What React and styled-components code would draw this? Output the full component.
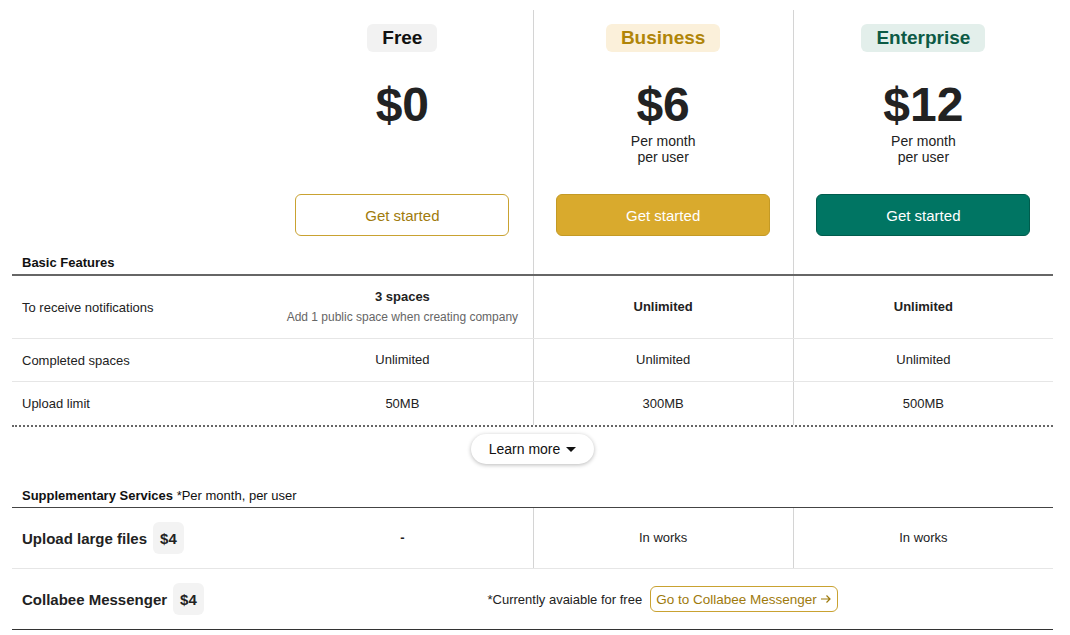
import styled, { createGlobalStyle } from "styled-components";

const GlobalStyle = createGlobalStyle`
  body {
    margin: 0;
    background: #fff;
    font-family: "Liberation Sans", Arial, sans-serif;
    color: #222;
  }
`;

const Page = styled.div`
  width: 1041px;
  padding: 10px 0 0 12px;
`;

const Grid = styled.div`
  display: grid;
  grid-template-columns: repeat(4, 1fr);
`;

const HeaderRow = styled(Grid)`
  border-bottom: 2px solid #666;
`;

const SectionLabel = styled.div`
  display: flex;
  align-items: flex-end;
  padding: 0 0 3px 10px;
  font-size: 13px;
  line-height: 16px;
  font-weight: bold;
  color: #111;
`;

const PlanCell = styled.div`
  display: flex;
  flex-direction: column;
  align-items: center;
  padding: 14px 0 38px;
  border-left: ${(p) => (p.$divider ? "1px solid #d4d4d4" : "none")};
`;

const Badge = styled.div`
  height: 28px;
  padding: 0 15px;
  border-radius: 6px;
  font-size: 19px;
  line-height: 28px;
  font-weight: bold;
  background: ${(p) => p.$bg};
  color: ${(p) => p.$color};
`;

const Price = styled.div`
  margin-top: 25px;
  font-size: 48px;
  line-height: 56px;
  font-weight: bold;
  color: #222;
`;

const PriceNote = styled.div`
  min-height: 32px;
  font-size: 14px;
  line-height: 16px;
  text-align: center;
  color: #222;
`;

const StartButton = styled.button`
  margin-top: 29px;
  width: 214px;
  height: 42px;
  border-radius: 6px;
  font-family: inherit;
  font-size: 15px;
  cursor: pointer;
  border: 1px solid ${(p) => p.$border};
  background: ${(p) => p.$bg};
  color: ${(p) => p.$color};
`;

const Row = styled(Grid)`
  border-bottom: ${(p) => p.$border || "1px solid #e6e6e6"};
`;

const Label = styled.div`
  display: flex;
  align-items: center;
  gap: 6px;
  padding-left: 10px;
  font-size: ${(p) => (p.$big ? "15px" : "13px")};
  font-weight: ${(p) => (p.$big ? "bold" : "normal")};
  color: #222;
`;

const Cell = styled.div`
  display: flex;
  flex-direction: column;
  align-items: center;
  justify-content: center;
  min-height: ${(p) => p.$h || 42}px;
  font-size: 13px;
  line-height: 16px;
  font-weight: ${(p) => (p.$bold ? "bold" : "normal")};
  border-left: ${(p) => (p.$divider ? "1px solid #d4d4d4" : "none")};
  color: #222;
`;

const SubNote = styled.div`
  margin-top: 4px;
  font-size: 12px;
  line-height: 16px;
  font-weight: normal;
  color: #666;
`;

const DottedRule = styled.div`
  border-top: 2px dotted #666;
`;

const MoreWrap = styled.div`
  display: flex;
  justify-content: center;
  padding-top: 7px;
`;

const MoreButton = styled.button`
  display: flex;
  align-items: center;
  gap: 6px;
  height: 30px;
  padding: 0 18px;
  border: none;
  border-radius: 15px;
  background: #fff;
  box-shadow: 0 1px 4px rgba(0, 0, 0, 0.28);
  font-family: inherit;
  font-size: 14px;
  color: #111;
`;

const Caret = styled.span`
  width: 0;
  height: 0;
  border-left: 5px solid transparent;
  border-right: 5px solid transparent;
  border-top: 5px solid #111;
`;

const SuppHeader = styled.div`
  margin-top: 24px;
  padding: 0 0 3px 10px;
  font-size: 13px;
  line-height: 16px;
  border-bottom: 1px solid #444;
  color: #111;

  b {
    font-weight: bold;
  }
`;

const Chip = styled.span`
  display: inline-flex;
  align-items: center;
  height: 32px;
  padding: 0 7px;
  border-radius: 6px;
  background: #f3f3f3;
  font-size: 15px;
  font-weight: bold;
`;

const SpanCell = styled.div`
  grid-column: 2 / 5;
  display: flex;
  align-items: center;
  justify-content: center;
  gap: 8px;
  min-height: 60px;
  font-size: 13px;
  color: #222;
`;

const LinkButton = styled.a`
  display: inline-flex;
  align-items: center;
  gap: 3px;
  height: 24px;
  padding: 0 5px;
  border: 1px solid #c9a231;
  border-radius: 6px;
  font-size: 13.5px;
  color: #9e7a0c;
  text-decoration: none;
`;

const plans = [
  {
    name: "Free",
    badgeBg: "#f2f2f2",
    badgeColor: "#111",
    price: "$0",
    note: null,
    btn: { bg: "#fff", border: "#c9a231", color: "#a07b0c" },
  },
  {
    name: "Business",
    badgeBg: "#fbf0da",
    badgeColor: "#b08508",
    price: "$6",
    note: true,
    btn: { bg: "#d9aa2d", border: "#c49a25", color: "#fff" },
  },
  {
    name: "Enterprise",
    badgeBg: "#e3efeb",
    badgeColor: "#0c5a45",
    price: "$12",
    note: true,
    btn: { bg: "#007563", border: "#005c4d", color: "#fff" },
  },
];

const features = [
  { label: "Completed spaces", values: ["Unlimited", "Unlimited", "Unlimited"] },
  { label: "Upload limit", values: ["50MB", "300MB", "500MB"] },
];

const App = () => {
  return (
    <Page>
      <GlobalStyle />
      <HeaderRow>
        <SectionLabel>Basic Features</SectionLabel>
        {plans.map((plan, i) => (
          <PlanCell key={plan.name} $divider={i > 0}>
            <Badge $bg={plan.badgeBg} $color={plan.badgeColor}>
              {plan.name}
            </Badge>
            <Price>{plan.price}</Price>
            <PriceNote>
              {plan.note && (
                <>
                  Per month
                  <br />
                  per user
                </>
              )}
            </PriceNote>
            <StartButton
              $bg={plan.btn.bg}
              $border={plan.btn.border}
              $color={plan.btn.color}
            >
              Get started
            </StartButton>
          </PlanCell>
        ))}
      </HeaderRow>

      <Row>
        <Label>To receive notifications</Label>
        <Cell $h={62} $bold>
          3 spaces
          <SubNote>Add 1 public space when creating company</SubNote>
        </Cell>
        <Cell $h={62} $bold $divider>
          Unlimited
        </Cell>
        <Cell $h={62} $bold $divider>
          Unlimited
        </Cell>
      </Row>
      {features.map((f, idx) => (
        <Row key={f.label} $border={idx === features.length - 1 ? "none" : undefined}>
          <Label>{f.label}</Label>
          {f.values.map((v, i) => (
            <Cell key={i} $h={idx === features.length - 1 ? 43 : 42} $divider={i > 0}>
              {v}
            </Cell>
          ))}
        </Row>
      ))}
      <DottedRule />

      <MoreWrap>
        <MoreButton>
          Learn more <Caret />
        </MoreButton>
      </MoreWrap>

      <SuppHeader>
        <b>Supplementary Services</b> *Per month, per user
      </SuppHeader>
      <Row>
        <Label $big>
          Upload large files <Chip>$4</Chip>
        </Label>
        <Cell $h={60} $bold>
          -
        </Cell>
        <Cell $h={60} $divider>
          In works
        </Cell>
        <Cell $h={60} $divider>
          In works
        </Cell>
      </Row>
      <Row $border="1px solid #333">
        <Label $big>
          Collabee Messenger <Chip>$4</Chip>
        </Label>
        <SpanCell>
          *Currently avaiable for free
          <LinkButton href="#">
            Go to Collabee Messenger
            <svg width="12" height="12" viewBox="0 0 12 12" fill="none">
              <path
                d="M1 6h9M6.5 2.5 10 6l-3.5 3.5"
                stroke="#9e7a0c"
                strokeWidth="1.2"
              />
            </svg>
          </LinkButton>
        </SpanCell>
      </Row>
    </Page>
  );
};

export default App;
